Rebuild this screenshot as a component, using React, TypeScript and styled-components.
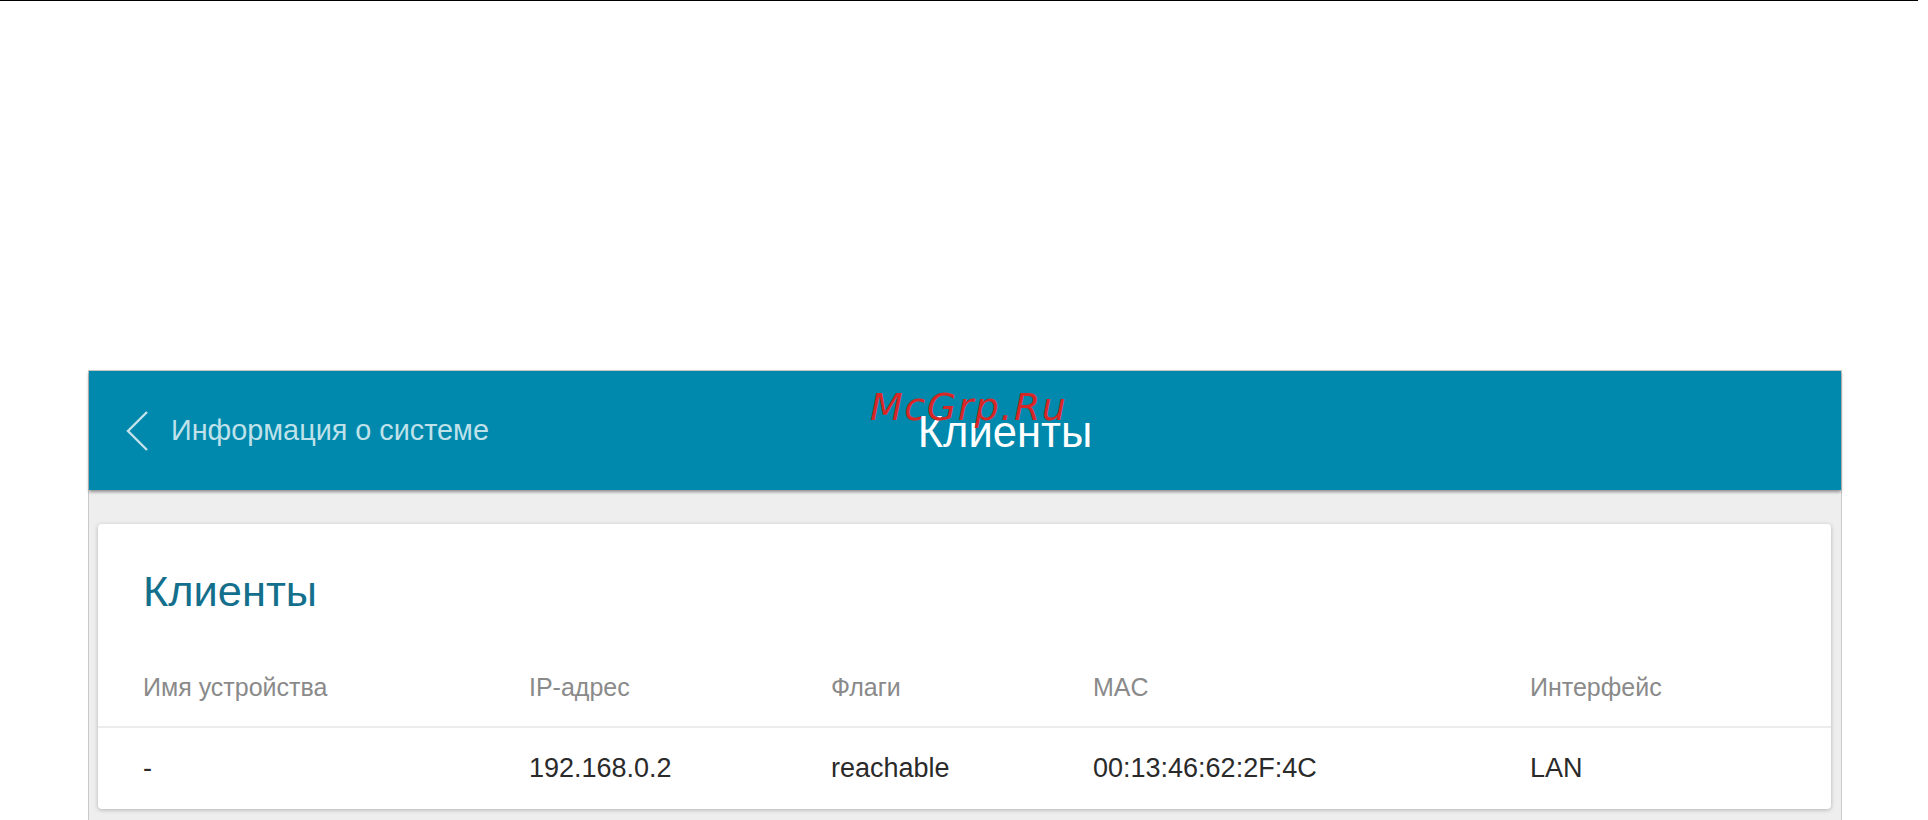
import * as React from 'react';
import styled, { createGlobalStyle } from 'styled-components';

interface Client {
    name: string;
    ip: string;
    flags: string;
    mac: string;
    iface: string;
}

const clients: Client[] = [
    { name: '-', ip: '192.168.0.2', flags: 'reachable', mac: '00:13:46:62:2F:4C', iface: 'LAN' },
];

const columns = ['Имя устройства', 'IP-адрес', 'Флаги', 'MAC', 'Интерфейс'];

export default function App() {
    return <>
        <GlobalStyle />
        <TopLine />
        <Panel>
            <Header>
                <BackLink>
                    <svg width="24" height="42" viewBox="0 0 24 42">
                        <polyline points="22,2 3,21 22,40" fill="none" stroke="#c3e2eb" strokeWidth="2.4" />
                    </svg>
                    <span>Информация о системе</span>
                </BackLink>
                <HeaderTitle>Клиенты</HeaderTitle>
                <span />
                <Watermark>McGrp.Ru</Watermark>
            </Header>
            <Body>
                <Card>
                    <CardTitle>Клиенты</CardTitle>
                    <Row header>
                        {columns.map(c => <Cell key={c}>{c}</Cell>)}
                    </Row>
                    {clients.map(c => (
                        <Row key={c.mac}>
                            <Cell>{c.name}</Cell>
                            <Cell>{c.ip}</Cell>
                            <Cell>{c.flags}</Cell>
                            <Cell>{c.mac}</Cell>
                            <Cell>{c.iface}</Cell>
                        </Row>
                    ))}
                </Card>
            </Body>
        </Panel>
    </>
}

const GlobalStyle = createGlobalStyle`
body {
margin: 0;
background: #fff;
font-family: "Liberation Sans", Arial, sans-serif;
}
`

const TopLine = styled.div`
width: 1918px;
height: 1px;
background: #000;
`

const Panel = styled.div`
margin: 369px 0 0 88px;
width: 1752px;
height: 450px;
border: 1px solid #c9c9c9;
display: flex;
flex-direction: column;
background: #eeeeee;
`

const Header = styled.div`
position: relative;
height: 119px;
flex-shrink: 0;
background: #0089ac;
box-shadow: 0 2px 3px rgba(0, 0, 0, 0.4);
display: grid;
grid-template-columns: 1fr auto 1fr;
align-items: center;
z-index: 1;
`

const BackLink = styled.div`
display: flex;
align-items: center;
gap: 22px;
padding-left: 36px;
color: #bfe1ea;
font-size: 28.8px;
svg {
display: block;
}
`

const HeaderTitle = styled.div`
color: #fff;
font-size: 43.5px;
padding-left: 80px;
padding-top: 4px;
`

const Watermark = styled.div`
position: absolute;
left: 781px;
top: 14px;
color: #d72626;
font-family: "DejaVu Sans", sans-serif;
font-style: italic;
font-size: 38px;
letter-spacing: 1.5px;
`

const Body = styled.div`
flex: 1;
padding: 34px 10px 12px 9px;
`

const Card = styled.div`
background: #fff;
border-radius: 4px;
box-shadow: 0 1px 4px rgba(0, 0, 0, 0.25);
padding-top: 42px;
height: 100%;
box-sizing: border-box;
`

const CardTitle = styled.h1`
margin: 0 0 28px 45px;
font-weight: 400;
font-size: 43.4px;
line-height: 50px;
color: #136f8b;
`

const Row = styled.div<{ header?: boolean }>`
display: grid;
grid-template-columns: 386px 302px 262px 437px 1fr;
align-items: center;
box-sizing: border-box;
padding: ${p => p.header ? '5px' : '0'} 0 0 45px;
height: ${p => p.header ? 84 : 80}px;
font-size: ${p => p.header ? 25 : 27}px;
color: ${p => p.header ? '#8a8a8a' : '#2a2a2a'};
border-bottom: ${p => p.header ? '2px solid #ececec' : 'none'};
`

const Cell = styled.div`
white-space: nowrap;
`
